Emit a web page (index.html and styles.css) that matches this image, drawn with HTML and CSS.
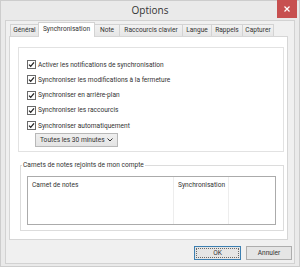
FILE: index.html
```html
<!DOCTYPE html>
<html lang="fr">
<head>
<meta charset="utf-8">
<title>Options</title>
<link rel="stylesheet" href="styles.css">
</head>
<body>
<div class="window">
  <div class="titlebar">
    <span class="title">Options</span>
    <span class="close"><svg width="6" height="6" viewBox="0 0 6 6"><path d="M0.5 0.5L5.5 5.5M5.5 0.5L0.5 5.5" stroke="#fff" stroke-width="1.2"/></svg></span>
  </div>
  <div class="client">
    <div class="tabs">
      <div class="tab t1">Général</div>
      <div class="tab t2 active">Synchronisation</div>
      <div class="tab t3">Note</div>
      <div class="tab t4">Raccourcis clavier</div>
      <div class="tab t5">Langue</div>
      <div class="tab t6">Rappels</div>
      <div class="tab t7">Capturer</div>
    </div>
    <div class="panel">
      <div class="box">
        <div class="check"><span class="cb"><svg width="9" height="9" viewBox="0 0 9 9"><rect x="0.5" y="0.5" width="8" height="8" fill="#fff" stroke="#6a6a6a"/><path d="M2 4.6L3.7 6.3L7 2.4" fill="none" stroke="#222" stroke-width="1.3"/></svg></span>Activer les notifications de synchronisation</div>
        <div class="check"><span class="cb"><svg width="9" height="9" viewBox="0 0 9 9"><rect x="0.5" y="0.5" width="8" height="8" fill="#fff" stroke="#6a6a6a"/><path d="M2 4.6L3.7 6.3L7 2.4" fill="none" stroke="#222" stroke-width="1.3"/></svg></span>Synchroniser les modifications à la fermeture</div>
        <div class="check"><span class="cb"><svg width="9" height="9" viewBox="0 0 9 9"><rect x="0.5" y="0.5" width="8" height="8" fill="#fff" stroke="#6a6a6a"/><path d="M2 4.6L3.7 6.3L7 2.4" fill="none" stroke="#222" stroke-width="1.3"/></svg></span>Synchroniser en arrière-plan</div>
        <div class="check"><span class="cb"><svg width="9" height="9" viewBox="0 0 9 9"><rect x="0.5" y="0.5" width="8" height="8" fill="#fff" stroke="#6a6a6a"/><path d="M2 4.6L3.7 6.3L7 2.4" fill="none" stroke="#222" stroke-width="1.3"/></svg></span>Synchroniser les raccourcis</div>
        <div class="check"><span class="cb"><svg width="9" height="9" viewBox="0 0 9 9"><rect x="0.5" y="0.5" width="8" height="8" fill="#fff" stroke="#6a6a6a"/><path d="M2 4.6L3.7 6.3L7 2.4" fill="none" stroke="#222" stroke-width="1.3"/></svg></span>Synchroniser automatiquement</div>
        <div class="select"><span>Toutes les 30 minutes</span><svg width="6" height="4" viewBox="0 0 6 4"><path d="M0.5 0.5L3 3L5.5 0.5" fill="none" stroke="#333" stroke-width="1"/></svg></div>
      </div>
      <div class="group">
        <div class="legend">Carnets de notes rejoints de mon compte</div>
        <div class="list">
          <div class="col c1"><div class="head">Carnet de notes</div></div>
          <div class="col c2"><div class="head">Synchronisation</div></div>
          <div class="col c3"><div class="head"></div></div>
        </div>
      </div>
    </div>
    <div class="buttons">
      <div class="btn default">OK</div>
      <div class="btn">Annuler</div>
    </div>
  </div>
</div>
</body>
</html>
```

FILE: styles.css
```css
* { box-sizing: border-box; }
html, body { margin: 0; padding: 0; }
body {
  width: 300px;
  height: 267px;
  background: #e9e9e9;
  font-family: Roboto, "Liberation Sans", sans-serif;
  font-size: 6.6px;
  color: #333;
  overflow: hidden;
}
.window {
  width: 300px;
  height: 267px;
  border: 1px solid #cdcdcd;
  background: #eaeaea;
  display: flex;
  flex-direction: column;
}
.titlebar {
  height: 19px;
  display: grid;
  grid-template-columns: 1fr auto 1fr;
  align-items: start;
}
.title {
  grid-column: 2;
  font-size: 10px;
  color: #333;
  line-height: 18px;
  font-family: "Open Sans", "Noto Sans", sans-serif;
}
.close {
  grid-column: 3;
  justify-self: end;
  margin-right: 2px;
  margin-top: -1px;
  width: 20px;
  height: 18px;
  background: #c75050;
  display: flex;
  align-items: center;
  justify-content: center;
}
.client {
  margin: 0 4px;
  height: 244px;
  border: 1px solid #d2d2d2;
  background: #f0f0f0;
  padding: 1px 0 0 3px;
  display: flex;
  flex-direction: column;
}
.tabs {
  display: flex;
  align-items: flex-end;
  height: 14px;
  padding-left: 1px;
  position: relative;
  z-index: 1;
}
.tab {
  height: 12px;
  line-height: 11px;
  text-align: center;
  border: 1px solid #d3d3d3;
  border-bottom: none;
  border-left: none;
  background: linear-gradient(#f2f2f2, #e6e6e6);
  white-space: nowrap;
}
.t1 { width: 29px; border-left: 1px solid #d3d3d3; }
.t2 { width: 56px; }
.t3 { width: 25px; }
.t4 { width: 63px; }
.t5 { width: 29px; }
.t6 { width: 31px; }
.t7 { width: 31px; }
.tab.active {
  background: #fff;
  line-height: 12px;
  position: relative;
  height: 15px;
  margin-bottom: -1px;
  border-left: 1px solid #d3d3d3;
  margin-left: -1px;
  width: 57px;
}
.panel {
  width: 279px;
  height: 204px;
  background: #fff;
  border: 1px solid #d6d6d6;
  padding: 10px 3px 0 8px;
  display: flex;
  flex-direction: column;
}
.box {
  height: 105px;
  border: 1px solid #e2e2e2;
  padding: 9px 0 0 8px;
  display: flex;
  flex-direction: column;
}
.check {
  display: flex;
  align-items: center;
  height: 15.25px;
  white-space: nowrap;
}
.cb { display: flex; width: 10px; margin-right: 1px; }
.select {
  margin-left: 8px;
  width: 83px;
  height: 14px;
  border: 1px solid #b8b8b8;
  background: linear-gradient(#efefef, #e4e4e4);
  display: flex;
  align-items: center;
  justify-content: space-between;
  padding: 0 4px;
}
.group {
  margin: 13px 0 0 2px;
  height: 66px;
  border: 1px solid #dcdcdc;
  padding: 10px 7px 5px 6px;
  position: relative;
  display: flex;
  flex-direction: column;
}
.legend {
  position: absolute;
  top: -5px;
  left: 1px;
  background: #fff;
  padding: 0 1px;
  line-height: 9px;
}
.list {
  flex: 1;
  border: 1px solid #ababab;
  display: flex;
}
.col { border-right: 1px solid #ededed; }
.c1 { width: 146px; }
.c2 { width: 55px; }
.c3 { flex: 1; border-right: none; }
.head {
  height: 16px;
  line-height: 16px;
  padding-left: 4px;
  white-space: nowrap;
}
.buttons {
  display: flex;
  justify-content: flex-end;
  gap: 5px;
  margin-top: 6px;
  padding-right: 2px;
}
.btn {
  width: 46px;
  height: 14px;
  border: 1px solid #adadad;
  background: #e5e5e5;
  display: flex;
  align-items: center;
  justify-content: center;
}
.btn.default {
  width: 47px;
  border-color: #3c7fb1;
  outline: 1px dotted #6a6a6a;
  outline-offset: -3px;
}
```
